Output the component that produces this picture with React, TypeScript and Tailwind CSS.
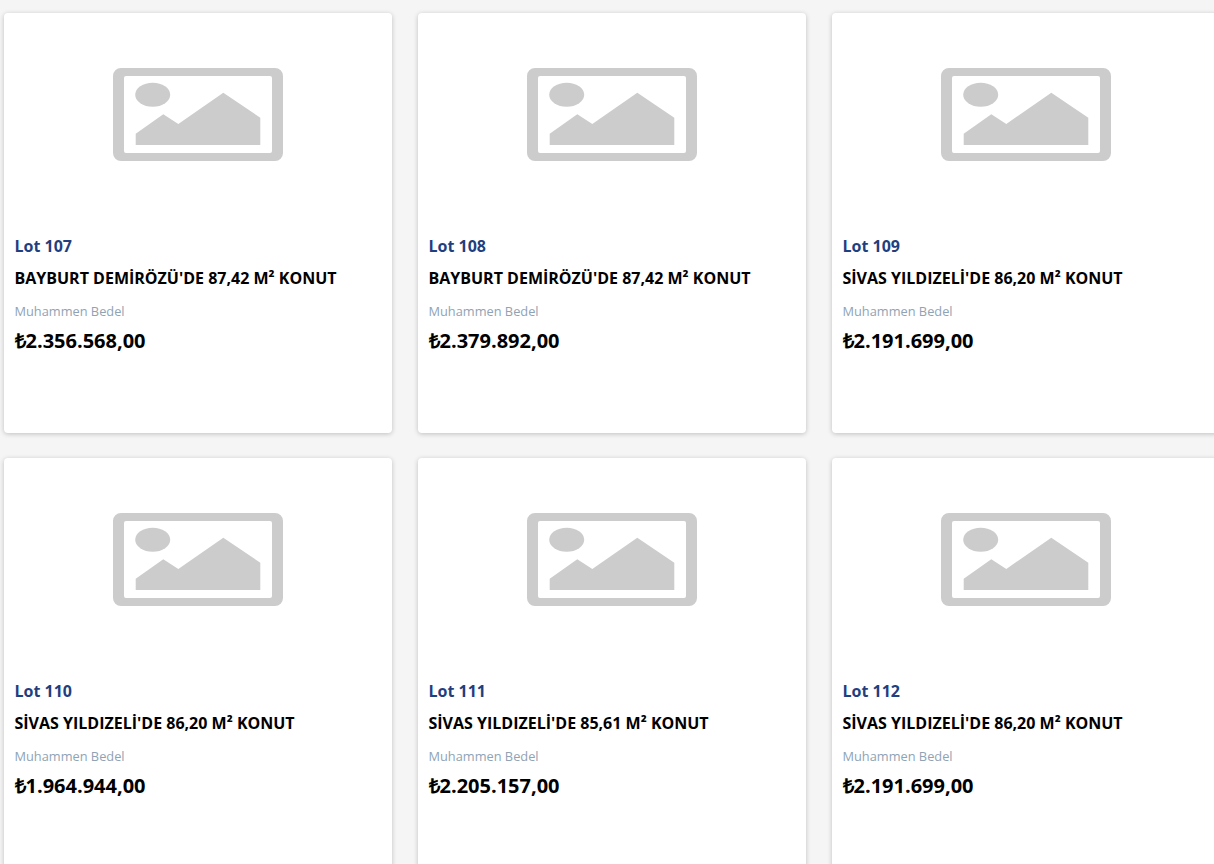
const lots = [
  { lot: "Lot 107", title: "BAYBURT DEMİRÖZÜ'DE 87,42 M² KONUT", price: "₺2.356.568,00" },
  { lot: "Lot 108", title: "BAYBURT DEMİRÖZÜ'DE 87,42 M² KONUT", price: "₺2.379.892,00" },
  { lot: "Lot 109", title: "SİVAS YILDIZELİ'DE 86,20 M² KONUT", price: "₺2.191.699,00" },
  { lot: "Lot 110", title: "SİVAS YILDIZELİ'DE 86,20 M² KONUT", price: "₺1.964.944,00" },
  { lot: "Lot 111", title: "SİVAS YILDIZELİ'DE 85,61 M² KONUT", price: "₺2.205.157,00" },
  { lot: "Lot 112", title: "SİVAS YILDIZELİ'DE 86,20 M² KONUT", price: "₺2.191.699,00" },
];

function Placeholder() {
  return (
    <svg viewBox="0 0 172 93" className="h-[93px] w-[172px]">
      <g transform="translate(0.5 0)" fill="#cccccc">
        <path
          fillRule="evenodd"
          d="M8.5 0 H162.5 A8 8 0 0 1 170.5 8 V85 A8 8 0 0 1 162.5 93 H8.5 A8 8 0 0 1 0.5 85 V8 A8 8 0 0 1 8.5 0 Z M13.5 8 A2 2 0 0 0 11.5 10 V83 A2 2 0 0 0 13.5 85 H157.5 A2 2 0 0 0 159.5 83 V10 A2 2 0 0 0 157.5 8 Z"
        />
        <ellipse cx="40.2" cy="26.7" rx="17.5" ry="12" />
        <path d="M23.2 77 V65.7 L50.8 46.3 L65.8 56 L110.8 24.7 L147.8 49.7 V77 Z" />
      </g>
    </svg>
  );
}

export default function App() {
  return (
    <div className="h-[864px] w-[1214px] overflow-hidden bg-[#f5f5f5] pl-1 pt-[13px] font-['Open_Sans',sans-serif]">
      <div className="grid w-[1240px] grid-cols-[388px_388px_388px] gap-x-[26px] gap-y-[25px]">
        {lots.map((item, idx) => (
          <div key={idx} className="h-[420px] rounded-[4px] bg-white pl-[10.5px] pr-[11px] shadow-[0_1px_5px_rgba(0,0,0,0.22)]">
            <div className="flex justify-center pt-[55px]">
              <Placeholder />
            </div>
            <p className="mt-[72px] text-base leading-[26px] font-bold text-[#1f3f7f]">{item.lot}</p>
            <h3 className="mt-1.5 text-base leading-[26px] font-bold text-black">{item.title}</h3>
            <p className="mt-[10px] text-[12.8px] leading-[20px] text-[#8fa3b5]">Muhammen Bedel</p>
            <p className="mt-[5px] text-xl leading-[30px] font-bold text-black">{item.price}</p>
          </div>
        ))}
      </div>
    </div>
  );
}
